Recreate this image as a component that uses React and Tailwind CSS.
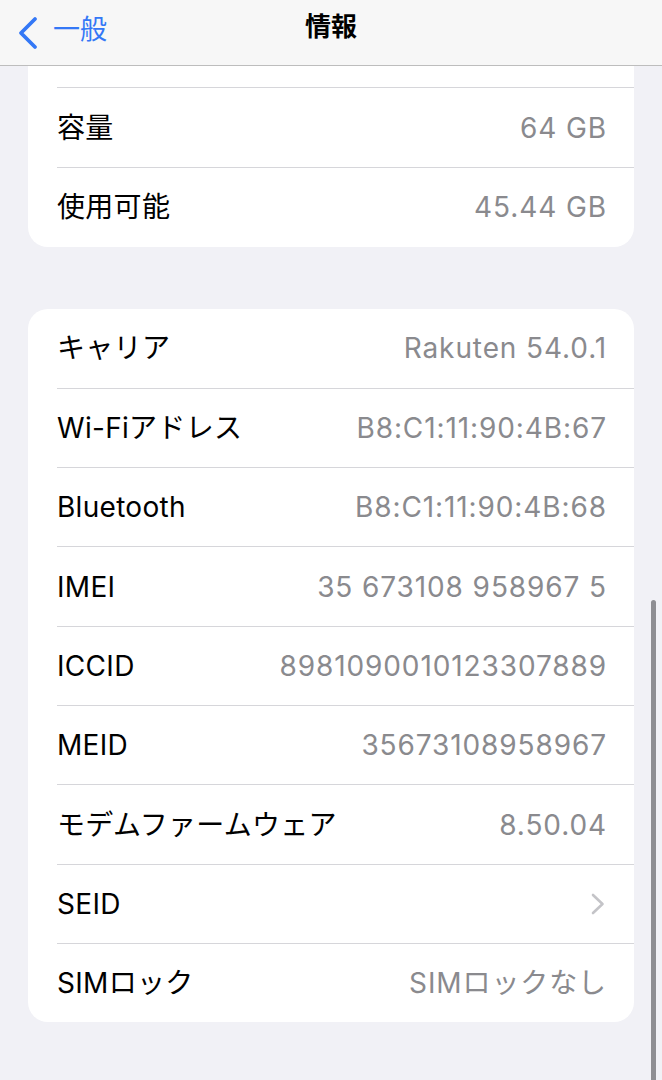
import React from "react";

const font = { fontFamily: 'Inter, "Noto Sans CJK JP", sans-serif' };

function Row({ label, value, chevron, first }) {
  return (
    <div className="pl-[29px]">
      <div
        className={`flex items-center justify-between h-[79.3px] pr-[28px] ${
          first ? "" : "border-t border-[#d6d6da]"
        }`}
      >
        <span className="text-[28px] text-black tracking-[0.3px]">{label}</span>
        {chevron ? (
          <svg width="14" height="22" viewBox="0 0 14 22" className="mr-[1px]">
            <path d="M2 2 L11.5 11 L2 20" fill="none" stroke="#c4c4c8" strokeWidth="2.6" strokeLinecap="round" strokeLinejoin="round" />
          </svg>
        ) : (
          <span className="text-[28px] text-[#8a8a8e] tracking-[0.9px] mr-[-1px]">{value}</span>
        )}
      </div>
    </div>
  );
}

export default function App() {
  const rows = [
    ["キャリア", "Rakuten 54.0.1"],
    ["Wi-Fiアドレス", "B8:C1:11:90:4B:67"],
    ["Bluetooth", "B8:C1:11:90:4B:68"],
    ["IMEI", "35 673108 958967 5"],
    ["ICCID", "8981090010123307889"],
    ["MEID", "35673108958967"],
    ["モデムファームウェア", "8.50.04"],
    ["SEID", null, true],
    ["SIMロック", "SIMロックなし"],
  ];
  return (
    <div className="relative w-[662px] h-[1080px] overflow-hidden bg-[#f1f1f6]" style={font}>
      <div className="h-[66px] bg-[#f7f7f7] border-b border-[#bdbdbd] flex items-center relative">
        <div className="flex items-center pl-[17px] gap-[14px] text-[#3478f6]">
          <svg width="22" height="34" viewBox="0 0 22 34">
            <path d="M18 3 L4 17 L18 31" fill="none" stroke="#3478f6" strokeWidth="3.8" strokeLinecap="round" strokeLinejoin="round" />
          </svg>
          <span className="text-[27px] leading-none mt-[-6px]">一般</span>
        </div>
        <div className="absolute left-0 right-0 top-0 h-full flex items-center justify-center pointer-events-none">
          <span className="text-[26px] font-bold text-black mt-[-12px]">情報</span>
        </div>
      </div>

      <div className="mx-[28px] bg-white rounded-b-[20px]">
        <div className="h-[21px]" />
        <div className="pl-[29px]">
          <div className="border-t border-[#d6d6da]" />
        </div>
        <Row label="容量" value="64 GB" first />
        <Row label="使用可能" value="45.44 GB" />
      </div>

      <div className="mx-[28px] mt-[62px] bg-white rounded-[20px]">
        {rows.map(([l, v, c], i) => (
          <Row key={l} label={l} value={v} chevron={c} first={i === 0} />
        ))}
      </div>

      <div className="absolute right-[6px] top-[600px] w-[5px] h-[500px] rounded-full bg-[#8e8e93]" />
    </div>
  );
}
